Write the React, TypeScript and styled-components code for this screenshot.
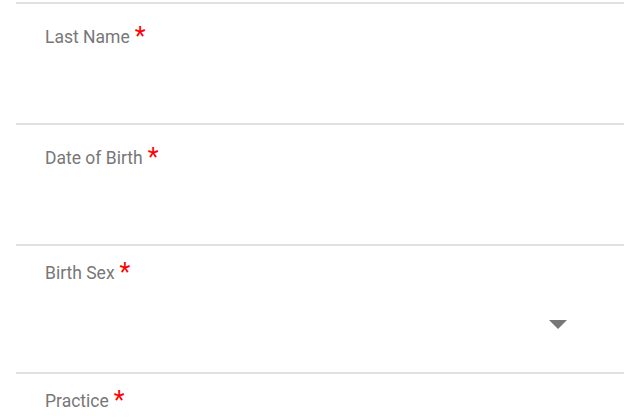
import React from "react";
import styled, { createGlobalStyle } from "styled-components";

const Global = createGlobalStyle`
  html, body { margin: 0; padding: 0; background: #ffffff; overflow: hidden; }
  body { font-family: Roboto, "Noto Sans", sans-serif; }
`;

const Form = styled.div`
  padding: 2px 16px 0 16px;
  display: flex;
  flex-direction: column;
`;

const Field = styled.div<{ $select?: boolean }>`
  border-top: 2px solid #e0e0e0;
  height: ${(p) => (p.$select ? 128 : 121)}px;
  padding-top: ${(p) => (p.$select ? 17 : 23)}px;
  box-sizing: border-box;
  display: flex;
  flex-direction: column;
  flex-shrink: 0;
`;

const Label = styled.label`
  display: flex;
  align-items: flex-start;
  padding-left: 29px;
  height: 20px;
  line-height: 20px;
  font-size: 17.5px;
  color: #777777;
`;

const Star = styled.span`
  color: #ff0000;
  font-size: 25px;
  line-height: 20px;
  margin-left: 5px;
  margin-top: 0px;
`;

const SelectRow = styled.div`
  display: flex;
  justify-content: flex-end;
  padding-right: 57px;
  margin-top: 37px;
`;

const Arrow = styled.svg`
  display: block;
`;

const fields: { label: string; select?: boolean }[] = [
  { label: "Last Name" },
  { label: "Date of Birth" },
  { label: "Birth Sex", select: true },
  { label: "Practice", select: true },
];

export default function App() {
  return (
    <>
      <Global />
      <Form>
        {fields.map((f) => (
          <Field key={f.label} $select={f.select}>
            <Label>
              {f.label}
              <Star>*</Star>
            </Label>
            {f.select && (
              <SelectRow>
                <Arrow width="18" height="9" viewBox="0 0 18 9">
                  <path d="M0 0 L18 0 L9 9 Z" fill="#777777" />
                </Arrow>
              </SelectRow>
            )}
          </Field>
        ))}
      </Form>
    </>
  );
}
